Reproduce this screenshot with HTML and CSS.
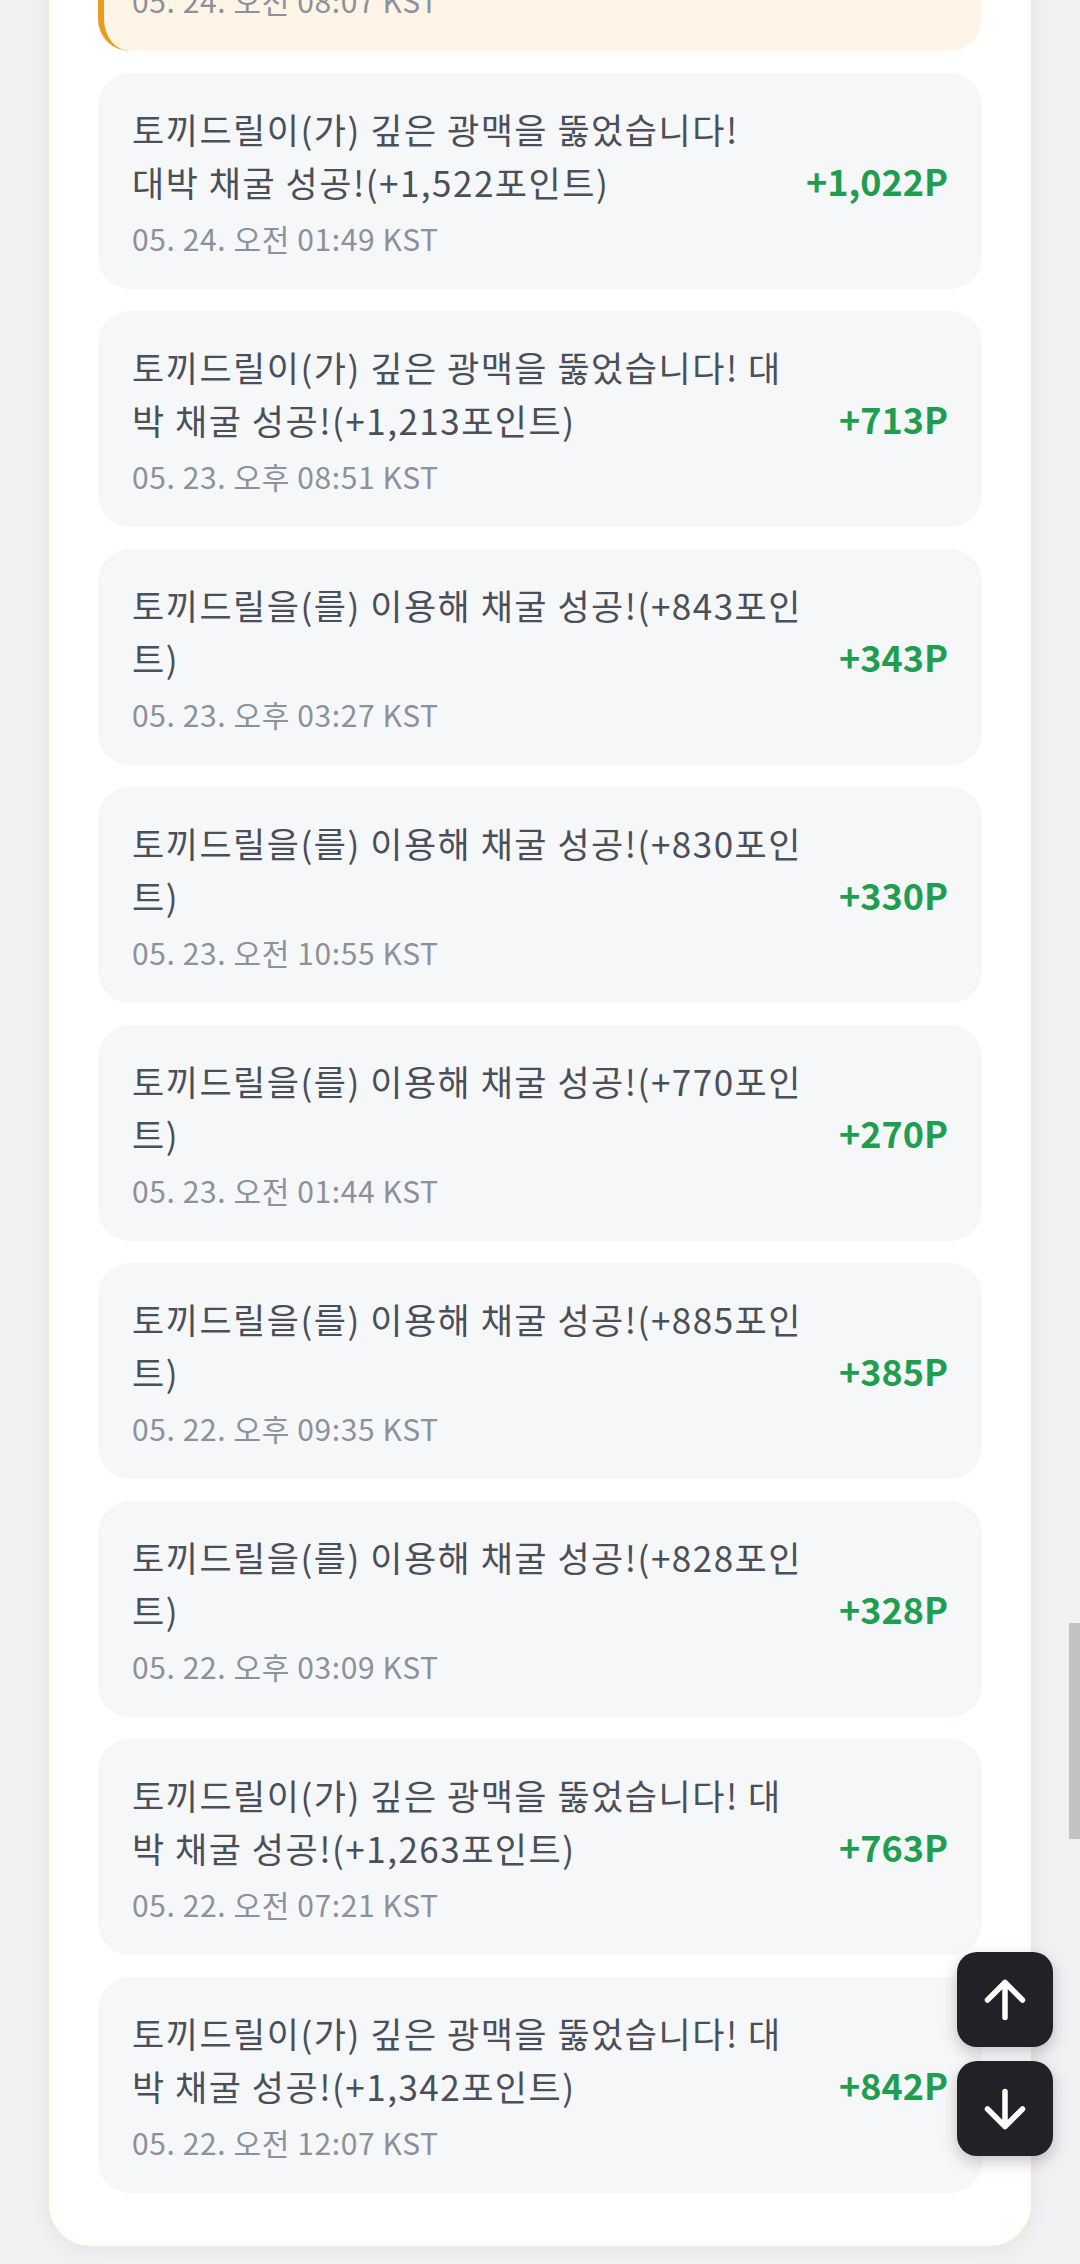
FILE: index.html
```html
<html>
  <head>
    <meta charset="utf-8">
    <title>채굴 기록</title>
    <link rel="stylesheet" href="styles.css">
  </head>
<body>

<div class="panel">
  <ul class="history">
    <li class="entry entry-hot">
      <div class="entry-body">
        <p class="entry-text">토끼드릴이(가) 전설의 광맥을 발견했습니다! 초대박 채굴 성공!(+2,140포인트)</p>
        <p class="entry-date">05. 24. 오전 08:07 KST</p>
      </div>
      <span class="entry-amount">+1,640P</span>
    </li>
    <li class="entry">
      <div class="entry-body">
        <p class="entry-text">토끼드릴이(가) 깊은 광맥을 뚫었습니다! 대박 채굴 성공!(+1,522포인트)</p>
        <p class="entry-date">05. 24. 오전 01:49 KST</p>
      </div>
      <span class="entry-amount">+1,022P</span>
    </li>
    <li class="entry">
      <div class="entry-body">
        <p class="entry-text">토끼드릴이(가) 깊은 광맥을 뚫었습니다! 대박 채굴 성공!(+1,213포인트)</p>
        <p class="entry-date">05. 23. 오후 08:51 KST</p>
      </div>
      <span class="entry-amount">+713P</span>
    </li>
    <li class="entry">
      <div class="entry-body">
        <p class="entry-text">토끼드릴을(를) 이용해 채굴 성공!(+843포인트)</p>
        <p class="entry-date">05. 23. 오후 03:27 KST</p>
      </div>
      <span class="entry-amount">+343P</span>
    </li>
    <li class="entry">
      <div class="entry-body">
        <p class="entry-text">토끼드릴을(를) 이용해 채굴 성공!(+830포인트)</p>
        <p class="entry-date">05. 23. 오전 10:55 KST</p>
      </div>
      <span class="entry-amount">+330P</span>
    </li>
    <li class="entry">
      <div class="entry-body">
        <p class="entry-text">토끼드릴을(를) 이용해 채굴 성공!(+770포인트)</p>
        <p class="entry-date">05. 23. 오전 01:44 KST</p>
      </div>
      <span class="entry-amount">+270P</span>
    </li>
    <li class="entry">
      <div class="entry-body">
        <p class="entry-text">토끼드릴을(를) 이용해 채굴 성공!(+885포인트)</p>
        <p class="entry-date">05. 22. 오후 09:35 KST</p>
      </div>
      <span class="entry-amount">+385P</span>
    </li>
    <li class="entry">
      <div class="entry-body">
        <p class="entry-text">토끼드릴을(를) 이용해 채굴 성공!(+828포인트)</p>
        <p class="entry-date">05. 22. 오후 03:09 KST</p>
      </div>
      <span class="entry-amount">+328P</span>
    </li>
    <li class="entry">
      <div class="entry-body">
        <p class="entry-text">토끼드릴이(가) 깊은 광맥을 뚫었습니다! 대박 채굴 성공!(+1,263포인트)</p>
        <p class="entry-date">05. 22. 오전 07:21 KST</p>
      </div>
      <span class="entry-amount">+763P</span>
    </li>
    <li class="entry">
      <div class="entry-body">
        <p class="entry-text">토끼드릴이(가) 깊은 광맥을 뚫었습니다! 대박 채굴 성공!(+1,342포인트)</p>
        <p class="entry-date">05. 22. 오전 12:07 KST</p>
      </div>
      <span class="entry-amount">+842P</span>
    </li>
  </ul>
</div>

<!-- 위/아래 이동 버튼 -->
<div class="jump">
  <button class="jump-btn" aria-label="맨 위로">
    <svg viewBox="0 0 24 24"><path d="M12 19V5M5 12l7-7 7 7"/></svg>
  </button>
  <button class="jump-btn" aria-label="맨 아래로">
    <svg viewBox="0 0 24 24"><path d="M12 5v14M5 12l7 7 7-7"/></svg>
  </button>
</div>

<div class="scroll-thumb"></div>

</body></html>
```

FILE: styles.css
```css
body {
  margin: 0;
  background: #f0f1f3;
  font-family: "Noto Sans CJK KR", "Noto Sans", sans-serif;
}

.panel {
  margin: -217px 47px 0;
  padding: 50px 49px 53px;
  background: #fff;
  border: 2px solid #f3e9d5;
  border-radius: 44px;
  box-shadow: 0 4px 18px rgba(0, 0, 0, 0.05);
}

.history {
  list-style: none;
  margin: 0;
  padding: 0;
  display: flex;
  flex-direction: column;
  gap: 22px;
}

.entry {
  display: flex;
  align-items: center;
  gap: 32px;
  padding: 30px 34px 33px;
  background: #f6f7f9;
  border-radius: 32px;
}

.entry-hot {
  background: #fff4e5;
  border-left: 6px solid #e99b1d;
  padding-left: 28px;
}

.entry-body {
  flex: 1;
  min-width: 0;
}

.entry-text {
  margin: 0;
  font-size: 35px;
  line-height: 52.5px;
  letter-spacing: 1.5px;
  color: #4a4f59;
}

.entry-date {
  margin: 12px 0 0;
  font-size: 30px;
  line-height: 36px;
  letter-spacing: 0.6px;
  color: #8c919b;
}

.entry-amount {
  font-size: 36px;
  font-weight: 700;
  color: #1f9e50;
  white-space: nowrap;
}

.jump {
  position: fixed;
  right: 27px;
  bottom: 108px;
  display: flex;
  flex-direction: column;
  gap: 14px;
}

.jump-btn {
  width: 96px;
  height: 95px;
  display: flex;
  align-items: center;
  justify-content: center;
  padding: 0;
  border: none;
  border-radius: 20px;
  background: #202228;
  box-shadow: 0 6px 16px rgba(0, 0, 0, 0.22);
  cursor: pointer;
}

.jump-btn svg {
  width: 60px;
  height: 60px;
  fill: none;
  stroke: #fff;
  stroke-width: 2.2;
  stroke-linecap: round;
  stroke-linejoin: round;
}

.scroll-thumb {
  position: fixed;
  top: 1623px;
  right: 0;
  width: 11px;
  height: 216px;
  background: #c2c2c2;
}
```
